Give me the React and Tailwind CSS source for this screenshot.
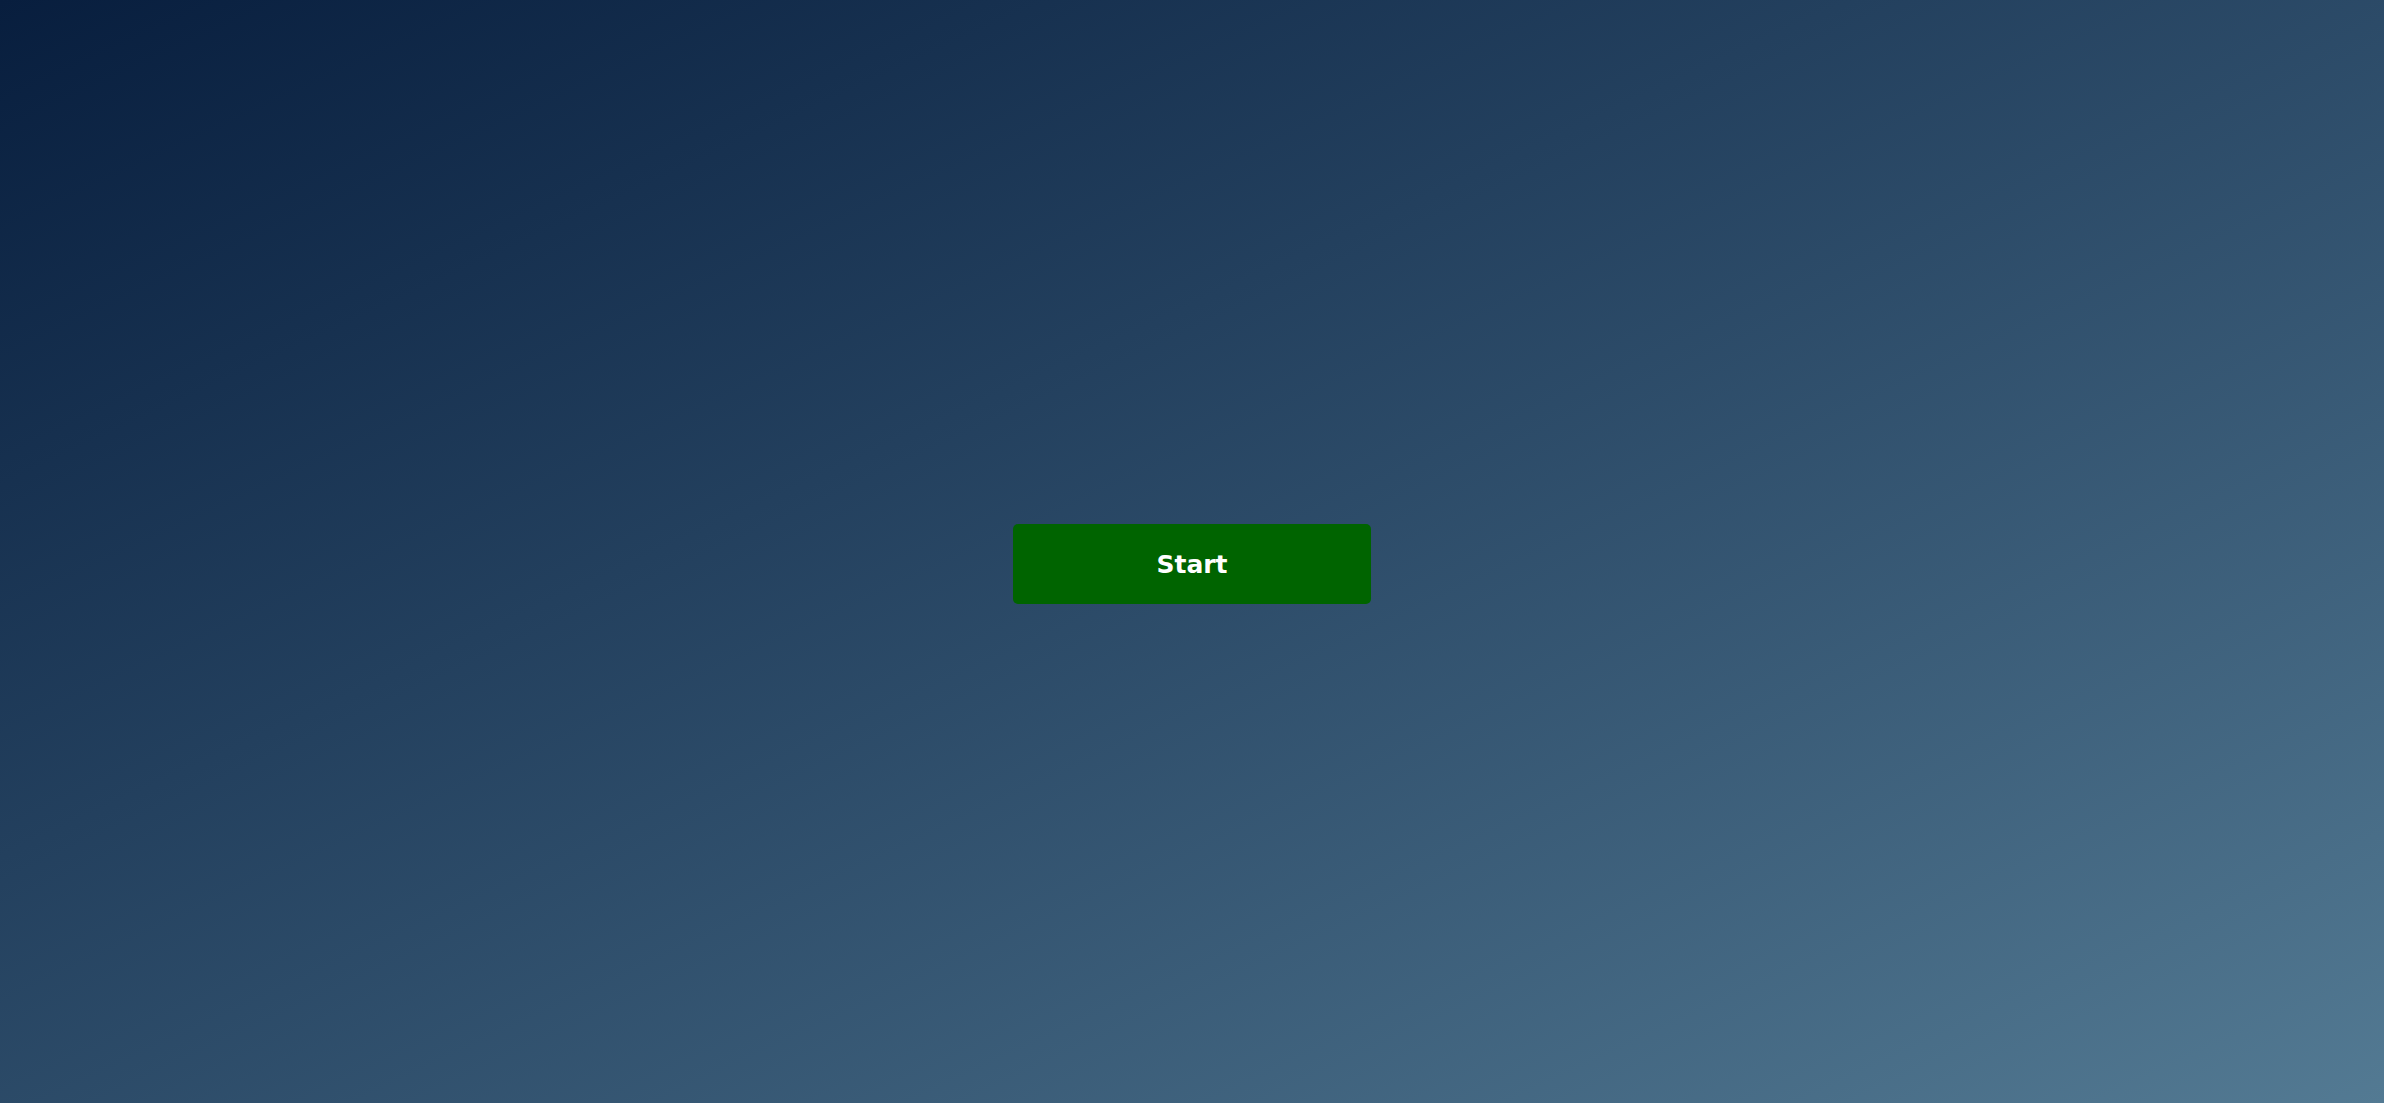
export default function App() {
  return (
    <div className="min-h-screen w-full flex items-center justify-center pt-[25px] bg-linear-to-br from-[#081e3e] to-[#537a93]">
      <button
        className="w-[358px] h-[80px] pt-[2px] rounded-[5px] bg-[#006400] text-white font-bold text-[25px]"
        style={{ fontFamily: '"DejaVu Sans", sans-serif' }}
      >
        Start
      </button>
    </div>
  );
}
